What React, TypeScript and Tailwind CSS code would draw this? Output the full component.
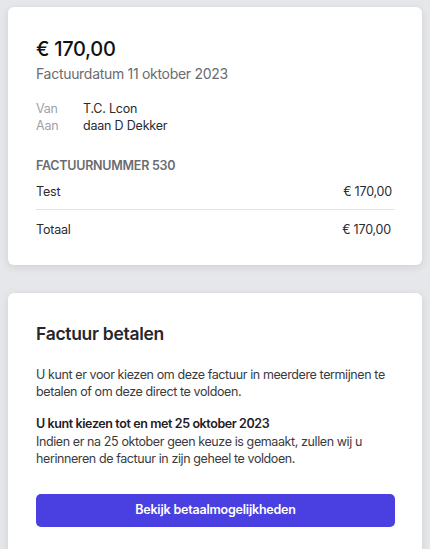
export default function App() {
  return (
    <div
      className="min-h-screen bg-[#e6e7ea] px-2 pt-[7px] flex flex-col gap-[28px]"
      style={{ fontFamily: 'Inter, "Noto Sans", sans-serif' }}
    >
      {/* Invoice summary */}
      <div className="bg-white rounded-md shadow-[0_2px_8px_rgba(0,0,0,0.10)] pl-[28px] pr-[27px] pt-[28px] pb-[27px]">
        <h1 className="text-[20px] leading-[28px] font-medium tracking-[-0.3px] text-[#111111]">€ 170,00</h1>
        <p className="mt-[1px] text-[14px] leading-[20px] tracking-[-0.3px] text-[#6b6b70]">Factuurdatum 11 oktober 2023</p>

        <div className="mt-[16px] grid grid-cols-[47px_1fr] text-[12.5px] leading-[17px] tracking-[-0.2px]">
          <span className="text-[#a0a0a6]">Van</span>
          <span className="text-[#2b2b30]">T.C. Lcon</span>
          <span className="text-[#a0a0a6]">Aan</span>
          <span className="text-[#2b2b30]">daan D Dekker</span>
        </div>

        <p className="mt-[23px] text-[12.5px] leading-[17px] font-semibold tracking-[-0.25px] text-[#6b6b70]">FACTUURNUMMER 530</p>
        <div className="mt-[9px] flex justify-between text-[12.5px] leading-[17px] tracking-[-0.2px] text-[#2b2b30] pb-[9px] border-b border-[#e3e3e6]">
          <span>Test</span>
          <span className="pr-[3px]">€ 170,00</span>
        </div>
        <div className="mt-[11px] flex justify-between text-[12.5px] leading-[17px] tracking-[-0.2px] text-[#2b2b30]">
          <span>Totaal</span>
          <span className="pr-[4px]">€ 170,00</span>
        </div>
      </div>

      {/* Payment */}
      <div className="bg-white rounded-t-md shadow-[0_2px_8px_rgba(0,0,0,0.10)] pl-[28px] pr-[27px] pt-[29px] pb-[24px] flex-1">
        <h2 className="text-[17.5px] leading-[24px] font-semibold tracking-[-0.3px] text-[#26272b]">Factuur betalen</h2>
        <p className="mt-[20px] text-[12.5px] leading-[17px] tracking-[-0.4px] text-[#3a3b40]">
          U kunt er voor kiezen om deze factuur in meerdere termijnen te betalen of om deze direct te voldoen.
        </p>
        <p className="mt-[15px] text-[12.5px] leading-[17.5px] tracking-[-0.4px] text-[#3a3b40]">
          <span className="font-semibold text-[#1f2024]">U kunt kiezen tot en met 25 oktober 2023</span>
          <br />
          Indien er na 25 oktober geen keuze is gemaakt, zullen wij u herinneren de factuur in zijn geheel te voldoen.
        </p>
        <button className="mt-[26px] w-full h-[33px] rounded-[5px] bg-[#4a3fe0] text-white text-[12.5px] font-semibold tracking-[-0.2px]">
          Bekijk betaalmogelijkheden
        </button>
      </div>
    </div>
  );
}
